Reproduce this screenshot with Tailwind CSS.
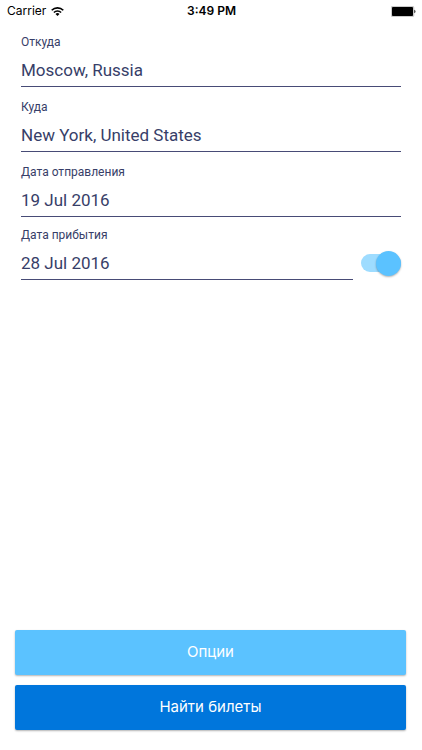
<!DOCTYPE html>
<html lang="ru">
<head>
<meta charset="utf-8">
<meta name="viewport" content="width=device-width, initial-scale=1">
<title>Поиск билетов</title>
<script src="https://cdn.jsdelivr.net/npm/@tailwindcss/browser@4"></script>
</head>
<body class="bg-white font-['Roboto',sans-serif] text-[#373e68]">
<div class="flex min-h-screen flex-col">
  <header class="grid h-[22px] grid-cols-3 items-center pl-[7px] pr-[6px] font-['Inter',sans-serif] text-[12px] leading-[22px] text-black">
    <div class="flex items-center gap-[5px]">
      <span>Carrier</span>
      <svg class="h-[9px] w-[13px]" viewBox="0 0 13 9" fill="none" stroke="#000" stroke-width="1.6" aria-hidden="true">
        <path d="M.7 3.3a8.2 8.2 0 0 1 11.6 0"/>
        <path d="M2.9 5.5a5.1 5.1 0 0 1 7.2 0"/>
        <path d="M6.5 9 4.5 7a2.9 2.9 0 0 1 4 0z" fill="#000" stroke="none"/>
      </svg>
    </div>
    <time class="text-center font-semibold">3:49 PM</time>
    <svg class="h-[11px] w-[25px] justify-self-end" viewBox="0 0 25 11" aria-hidden="true">
      <rect x=".25" y=".25" width="22.5" height="10.5" rx="1.5" fill="#fff" stroke="#777" stroke-width=".5"/>
      <rect x="1" y="1" width="21" height="9" rx=".8"/>
      <path d="M23.4 3.8c1.4.4 1.4 3 0 3.4z"/>
    </svg>
  </header>

  <form class="flex flex-1 flex-col">
    <div class="flex flex-col px-[21px]">
      <div class="flex flex-col pt-3">
        <label for="from" class="text-[12px] leading-4">Откуда</label>
        <input id="from" type="text" value="Moscow, Russia" class="h-[37px] w-full border-b border-[#474b76] pt-1 text-[17px] outline-none">
      </div>
      <div class="flex flex-col pt-3">
        <label for="to" class="text-[12px] leading-4">Куда</label>
        <input id="to" type="text" value="New York, United States" class="h-[37px] w-full border-b border-[#474b76] pt-1 text-[17px] outline-none">
      </div>
      <div class="flex flex-col pt-3">
        <label for="depart" class="text-[12px] leading-4">Дата отправления</label>
        <input id="depart" type="text" value="19 Jul 2016" class="h-[37px] w-full border-b border-[#474b76] pt-1 text-[17px] outline-none">
      </div>
      <div class="flex items-end gap-2">
        <div class="flex flex-1 flex-col pt-[10px]">
          <label for="return" class="text-[12px] leading-4">Дата прибытия</label>
          <input id="return" type="text" value="28 Jul 2016" class="h-[37px] w-full border-b border-[#474b76] pt-1 text-[17px] outline-none">
        </div>
        <label class="flex h-[34px] w-10 items-center">
          <input type="checkbox" role="switch" checked aria-label="Обратный билет" class="peer sr-only">
          <span class="flex h-[18px] w-10 items-center rounded-full bg-[#9edcff] peer-checked:justify-end">
            <span class="size-[25px] rounded-full bg-[#5bc2ff] shadow-[0_1px_2px_rgba(0,0,0,0.3)]"></span>
          </span>
        </label>
      </div>
    </div>

    <div class="mt-auto flex flex-col gap-[10px] pr-4 pl-[15px] pb-5 font-['Inter',sans-serif] text-[15px] text-white">
      <button type="button" class="h-[45px] w-full rounded-[2px] bg-[#5bc2ff] shadow-[0_1px_2px_rgba(0,0,0,0.3)]">Опции</button>
      <button type="submit" class="h-[45px] w-full rounded-[2px] bg-[#0076dc] shadow-[0_1px_2px_rgba(0,0,0,0.3)]">Найти билеты</button>
    </div>
  </form>
</div>
</body>
</html>
